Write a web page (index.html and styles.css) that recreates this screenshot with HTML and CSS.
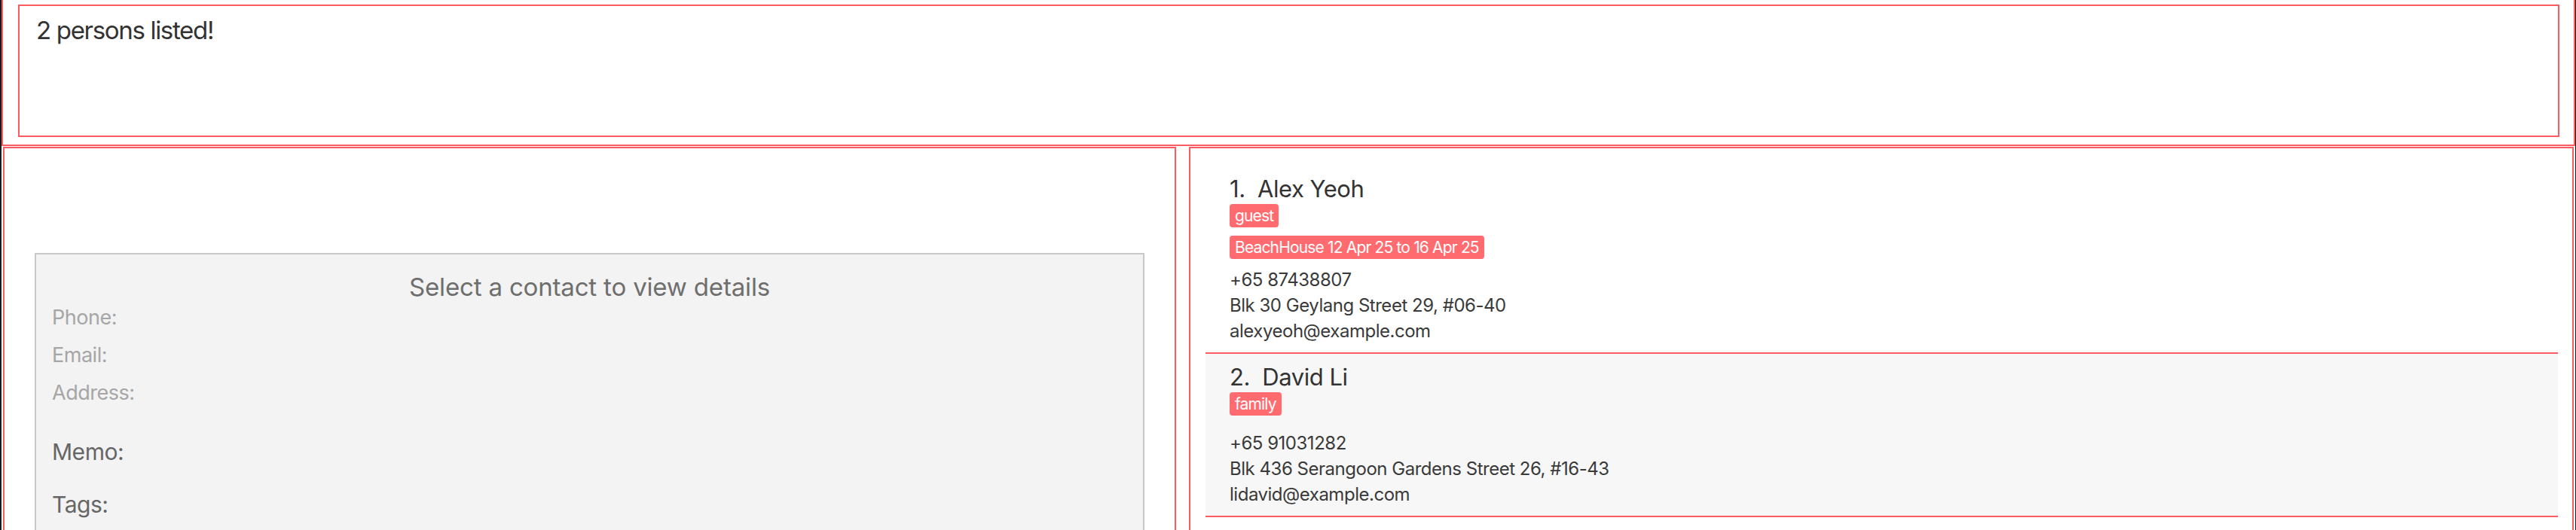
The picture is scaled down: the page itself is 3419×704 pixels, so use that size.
FILE: index.html
```html
<!DOCTYPE html>
<html lang="en">
<head>
<meta charset="utf-8">
<title>Address Book</title>
<link rel="stylesheet" href="styles.css">
</head>
<body>
<div class="window">
  <div class="result-wrap">
    <div class="result-box">2 persons listed!</div>
  </div>
  <div class="panels">
    <section class="left-panel">
      <div class="detail-card">
        <div class="detail-title">Select a contact to view details</div>
        <div class="detail-field">Phone:</div>
        <div class="detail-field">Email:</div>
        <div class="detail-field">Address:</div>
        <div class="detail-section memo">Memo:</div>
        <div class="detail-section tags-label">Tags:</div>
      </div>
    </section>
    <section class="right-panel">
      <div class="person-list">
        <div class="person-card">
          <div class="person-name">1.  Alex Yeoh</div>
          <div class="tag-row"><span class="tag">guest</span></div>
          <div class="tag-row booking-row"><span class="tag">BeachHouse 12 Apr 25 to 16 Apr 25</span></div>
          <div class="person-info">
            <div>+65 87438807</div>
            <div>Blk 30 Geylang Street 29, #06-40</div>
            <div>alexyeoh@example.com</div>
          </div>
        </div>
        <div class="person-card odd">
          <div class="person-name">2.  David Li</div>
          <div class="tag-row"><span class="tag">family</span></div>
          <div class="tag-row booking-row empty"></div>
          <div class="person-info">
            <div>+65 91031282</div>
            <div>Blk 436 Serangoon Gardens Street 26, #16-43</div>
            <div>lidavid@example.com</div>
          </div>
        </div>
      </div>
    </section>
  </div>
</div>
</body>
</html>
```
FILE: styles.css
```css
* { box-sizing: border-box; }
html, body { margin: 0; padding: 0; }
body {
  width: 3419px;
  height: 704px;
  overflow: hidden;
  background: #ffffff;
  font-family: Inter, "Liberation Sans", sans-serif;
  color: #333333;
  letter-spacing: -0.03em;
}
.window {
  display: flex;
  flex-direction: column;
  height: 704px;
  border-left: 2px solid #1b1b1b;
  border-right: 1px solid #1b1b1b;
  overflow: hidden;
}
.result-wrap {
  border: 2px solid #fd5b62;
  border-top: none;
  padding: 6px 19px 10px 20px;
}
.result-box {
  height: 176px;
  border: 2px solid #fd5b62;
  padding: 12px 22px;
  font-size: 33px;
  line-height: 40px;
  letter-spacing: -0.04em;
  color: #333333;
}
.panels {
  display: flex;
  gap: 17px;
  padding: 0 2px;
  margin-top: 1px;
  flex: 1;
  min-height: 0;
}
.left-panel {
  width: 1557px;
  flex: none;
  border: 2px solid #fd5b62;
  border-bottom: none;
  padding: 139px 40px 0 40px;
}
.detail-card {
  height: 600px;
  border: 2px solid #c8c8c8;
  background: #f3f3f3;
  padding: 23px 21px;
}
.detail-title {
  text-align: center;
  font-size: 33px;
  line-height: 40px;
  letter-spacing: -0.005em;
  color: #6e6e6e;
  margin-bottom: 4px;
}
.detail-field {
  font-size: 27px;
  line-height: 34px;
  color: #a6a6a6;
}
.detail-field + .detail-field { margin-top: 16px; }
.detail-section {
  font-size: 30px;
  line-height: 36px;
  color: #666666;
}
.memo { margin-top: 43px; }
.tags-label { margin-top: 34px; }
.right-panel {
  width: 1838px;
  flex: none;
  border: 2px solid #fd5b62;
  border-bottom: none;
  padding: 23px 19px 0 20px;
}
.person-card {
  padding: 12px 0 11px 32px;
  border-bottom: 2px solid #fd5b62;
  background: #ffffff;
}
.person-card.odd { background: #f7f7f7; }
.person-name {
  white-space: pre;
  font-size: 31px;
  line-height: 38px;
  color: #333333;
  margin-bottom: 1px;
}
.tag-row {
  display: flex;
  flex-wrap: wrap;
  gap: 6px;
}
.booking-row { margin-top: 11px; }
.booking-row.empty { margin-top: 9px; }
.tag {
  display: inline-block;
  background: #ff6b6f;
  color: #ffffff;
  font-size: 21px;
  line-height: 27px;
  letter-spacing: -0.04em;
  padding: 2px 7px;
  border-radius: 4px;
}
.person-info {
  margin-top: 11px;
  font-size: 24px;
  line-height: 34px;
  color: #3a3a3a;
}
```
